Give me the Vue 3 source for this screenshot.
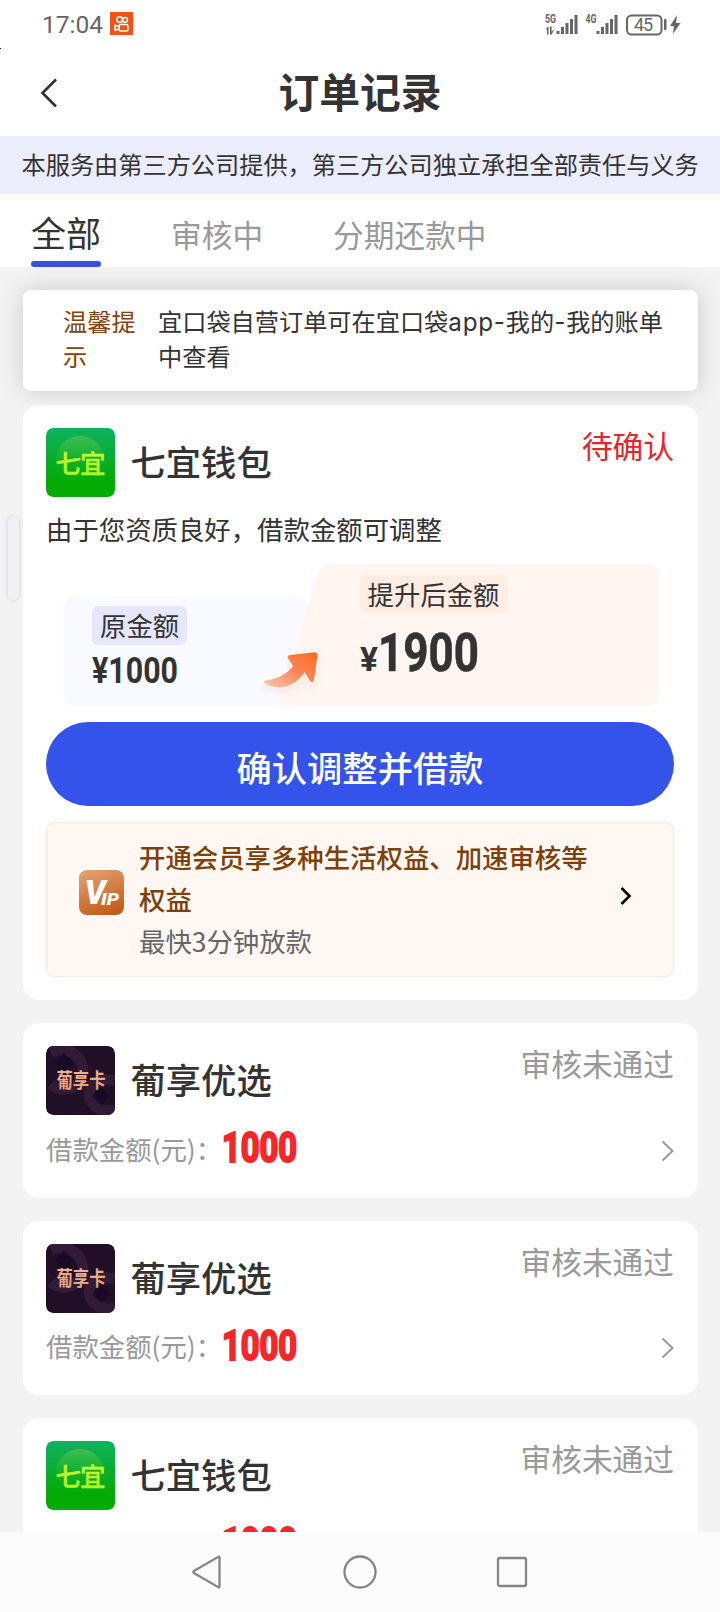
<script setup>
const tabs = ['全部', '审核中', '分期还款中']
const orders = [
  { name: '葡享优选', logo: 'pu', status: '审核未通过', amount: '1000' },
  { name: '葡享优选', logo: 'pu', status: '审核未通过', amount: '1000' },
  { name: '七宜钱包', logo: 'qi', status: '审核未通过', amount: '1000' },
]
</script>

<template>
  <div class="screen">
    <svg width="0" height="0" class="defs">
      <defs>
        <linearGradient id="green" x1="0" y1="0" x2="0" y2="1">
          <stop offset="0" stop-color="#0db261" /><stop offset=".75" stop-color="#04ab08" /><stop offset="1" stop-color="#04ab02" />
        </linearGradient>
        <linearGradient id="disc" x1="0" y1="0" x2="0" y2="1">
          <stop offset="0" stop-color="#4fc153" stop-opacity=".8" /><stop offset=".75" stop-color="#20b51a" stop-opacity="0" />
        </linearGradient>
        <linearGradient id="lime" x1="0" y1="0" x2="0" y2="1">
          <stop offset="0" stop-color="#d5f53a" /><stop offset="1" stop-color="#a4f51c" />
        </linearGradient>
        <linearGradient id="gold" x1="0" y1="0" x2="0" y2="1">
          <stop offset="0" stop-color="#f2b98f" /><stop offset="1" stop-color="#dd9c78" />
        </linearGradient>
        <linearGradient id="arrow" x1="1" y1="0" x2="0" y2="1">
          <stop offset="0" stop-color="#fd6a26" /><stop offset=".45" stop-color="#fc8450" /><stop offset="1" stop-color="#ffc9b5" />
        </linearGradient>
        <linearGradient id="copper" x1=".2" y1="0" x2=".6" y2="1">
          <stop offset="0" stop-color="#e2a071" /><stop offset="1" stop-color="#c35c1c" />
        </linearGradient>
        <symbol id="logo-qi" viewBox="0 0 69 69">
          <rect width="69" height="69" rx="7" fill="url(#green)" />
          <circle cx="34" cy="32" r="24" fill="url(#disc)" />
          <text x="9.500" y="45" font-size="25.500" font-weight="500" textLength="50" fill="url(#lime)" stroke="#bff52b" stroke-width=".4">七宜</text>
        </symbol>
        <symbol id="logo-pu" viewBox="0 0 69 69">
          <rect width="69" height="69" rx="7" fill="#210f28" />
          <g fill="none" stroke="#311b36" stroke-width="11">
            <path d="M5 6a22 22 0 0 1 32 20a19 19 0 0 1-32 12" /><path d="M69 64a20 20 0 0 1-26-15c0-12 12-18 26-14" />
          </g>
          <path d="M18 7l10 10-9 9-10-10zM55 41l9 9-9 9-9-9z" fill="#180a27" />
          <text x="10.500" y="41.500" font-size="20" font-weight="700" textLength="49" lengthAdjust="spacingAndGlyphs" fill="url(#gold)">葡享卡</text>
        </symbol>
      </defs>
    </svg>

    <header class="status-bar">
      <div class="status-left">
        <svg width="64" height="24"><text x="1" y="21" font-size="24.500" textLength="61" class="clock">17:04</text></svg>
        <svg class="app-badge" width="23" height="23" viewBox="0 0 23 23">
          <rect width="23" height="23" fill="#ef5316" />
          <g fill="none" stroke="#fff" stroke-width="1.500"><circle cx="9.600" cy="7.600" r="2.800" /><circle cx="15" cy="7.900" r="2.400" /><rect x="9" y="12.500" width="9" height="6.500" rx="2" /><path d="M9 14.500l-4-1.300v5l4-1.300z" /></g>
        </svg>
      </div>
      <svg class="status-right" width="140" height="26" viewBox="0 0 140 26">
        <g fill="#666">
          <text x="0" y="11" class="net" textLength="11" lengthAdjust="spacingAndGlyphs">5G</text>
          <text x="40.500" y="11" class="net" textLength="11" lengthAdjust="spacingAndGlyphs">4G</text>
          <path d="M.5 17l3-2.500v8h-1.500v-5zM5 14.500h1.600v5l3-2.300-3 5.300h-1.600z" />
          <path d="M11.500 19h3v3h-3zM16 15h3v7h-3zM20.500 11h3v11h-3zM25 7h3v15h-3zM29.500 3h3v19h-3z" />
          <path d="M51.500 19h3v3h-3zM56 15h3v7h-3zM60.500 11h3v11h-3zM65 7h3v15h-3zM69.500 3h3v19h-3z" />
          <rect x="119" y="7" width="2.500" height="11" rx="1" />
          <path d="M132 3l-7 11h4l-1 8 7.500-11h-4.500z" />
          <text x="89" y="18.500" class="battery" textLength="19">45</text>
        </g>
        <rect x="82" y="3.500" width="34.500" height="19" rx="4.500" fill="none" stroke="#666" stroke-width="2" />
      </svg>
    </header>
    <i class="speck"></i>

    <nav class="title-bar">
      <svg class="back" width="18" height="30" viewBox="0 0 18 30"><path d="M16 1.500L2.500 15 16 28.500" fill="none" stroke="#333" stroke-width="2.700" /></svg>
      <h1>订单记录</h1>
    </nav>
    <div class="disclaimer">本服务由第三方公司提供，第三方公司独立承担全部责任与义务</div>
    <div class="tabs">
      <div v-for="(tab, i) in tabs" :key="tab" class="tab" :class="{ active: i === 0 }">{{ tab }}</div>
    </div>

    <main class="content">
      <section class="tip">
        <span class="tip-label">温馨提示</span>
        <span class="tip-text">宜口袋自营订单可在宜口袋<span class="latin">app-</span>我的<span class="latin">-</span>我的账单中查看</span>
      </section>

      <section class="card main-card">
        <div class="head">
          <svg class="logo"><use href="#logo-qi" /></svg>
          <h2>七宜钱包</h2>
          <span class="state pending">待确认</span>
        </div>
        <p class="desc">由于您资质良好，借款金额可调整</p>
        <div class="compare">
          <svg class="compare-bg" width="596" height="143" viewBox="0 0 596 143">
            <path d="M12 33H230Q246 33 244 48L222 142H12Q0 142 0 130V45Q0 33 12 33Z" fill="#f9faff" />
            <path d="M267 0H582Q596 0 596 14V128Q596 142 582 142H216L253 12Q257 0 267 0Z" fill="#fff6f1" />
            <path transform="translate(0 2)" d="M254.500 89Q254.500 86 251 86.300L227 89Q223 89.500 225.500 93L230 100Q220 113 200 115Q204 121 218 121.500Q234 119 241.500 106L247 115Q250 118 251 114Z" fill="url(#arrow)" stroke="#fff" stroke-width="2" paint-order="stroke" class="arrow" />
          </svg>
          <div class="before">
            <span class="chip">原金额</span>
            <svg width="90" height="34"><text x="0" y="29" font-size="36" textLength="86" lengthAdjust="spacingAndGlyphs" class="num">¥1000</text></svg>
          </div>
          <div class="after">
            <span class="chip warm">提升后金额</span>
            <svg width="130" height="48"><text x="0" y="43" font-size="34" textLength="18" lengthAdjust="spacingAndGlyphs" class="num">¥</text><text x="18" y="43" font-size="53.500" textLength="101" lengthAdjust="spacingAndGlyphs" class="num thick">1900</text></svg>
          </div>
        </div>
        <button class="confirm">确认调整并借款</button>
        <div class="vip">
          <svg class="vip-icon" width="45" height="45" viewBox="0 0 45 45">
            <rect width="45" height="45" rx="8" fill="url(#copper)" />
            <g fill="#fff"><text x="5.500" y="34" class="vip-v" textLength="21" lengthAdjust="spacingAndGlyphs">V</text><text x="22" y="34.500" class="vip-ip" textLength="18" lengthAdjust="spacingAndGlyphs">IP</text></g>
          </svg>
          <div class="vip-copy">
            <div class="vip-title">开通会员享多种生活权益、加速审核等权益</div>
            <div class="vip-sub">最快3分钟放款</div>
          </div>
          <svg class="vip-chevron" width="12" height="18" viewBox="0 0 12 18"><path d="M1.500 1L9.500 9l-8 8" fill="none" stroke="#000" stroke-width="2.600" /></svg>
        </div>
      </section>

      <section v-for="(o, i) in orders" :key="i" class="card order">
        <div class="head">
          <svg class="logo"><use :href="'#logo-' + o.logo" /></svg>
          <h2>{{ o.name }}</h2>
          <span class="state">{{ o.status }}</span>
        </div>
        <div class="amount">
          <span class="amount-label">借款金额(元)：</span>
          <svg class="amount-num" width="80" height="38"><text x="1" y="33.500" font-size="43" textLength="75" lengthAdjust="spacingAndGlyphs" class="num red">{{ o.amount }}</text></svg>
          <svg class="chevron" width="13" height="22" viewBox="0 0 13 22"><path d="M1.500 1.500L11.500 11l-10 9.500" fill="none" stroke="#999" stroke-width="2" /></svg>
        </div>
      </section>
    </main>

    <i class="handle"></i>
    <footer class="sys-nav">
      <svg width="34" height="36" viewBox="0 0 34 36"><path d="M28.500 3.500v29q0 1.500-1.300.6L3.300 19.300q-2-1.300 0-2.600L27.200 2.900q1.300-.9 1.300.6z" /></svg>
      <svg width="36" height="36" viewBox="0 0 36 36"><circle cx="18" cy="18" r="15.500" /></svg>
      <svg width="34" height="36" viewBox="0 0 34 36"><rect x="3" y="4" width="28" height="28" rx="1.500" /></svg>
    </footer>
  </div>
</template>

<style>
body { margin: 0; }
</style>

<style scoped>
.screen { position: relative; display: flex; flex-direction: column; width: 720px; height: 1612px; overflow: hidden; background: #f3f3f3; color: #333; font-family: "Noto Sans CJK SC", sans-serif; }
.screen svg { display: block; flex: none; overflow: visible; }
.screen .defs { position: absolute; }
h1, h2, p { margin: 0; }
.status-bar { flex: none; display: flex; justify-content: space-between; height: 48px; padding: 0 36px 0 41px; background: #fff; }
.status-left { display: flex; gap: 5px; padding-top: 12px; }
.clock { font-family: Roboto, sans-serif; fill: #666; }
.status-right { margin: 12px -1px 0 0; }
.net { font: 700 12.500px Roboto, sans-serif; }
.battery { font: 18px Roboto, sans-serif; }
.speck { position: absolute; left: 0; top: 48px; width: 1px; height: 1px; background: #000; }
.title-bar { flex: none; display: grid; grid-template-columns: 80px 1fr 80px; align-items: center; height: 88px; background: #fff; }
.back { margin: 1px 0 0 39.500px; }
h1 { margin-top: -3px; text-align: center; font-size: 40.800px; line-height: 85px; font-weight: 700; }
.disclaimer { flex: none; height: 58px; padding-left: 21.500px; background: #ebedfd; font-size: 24.200px; line-height: 56px; white-space: nowrap; }
.tabs { flex: none; display: flex; gap: 70px; height: 73px; padding-left: 31px; background: #fff; }
.tab { height: 67px; color: #999; font-size: 30.700px; line-height: 79px; }
.tab.active { position: relative; color: #333; font-size: 35px; line-height: 76px; }
.tab.active::after { content: ""; position: absolute; left: 0; right: 0; bottom: -6px; height: 6px; border-radius: 3px; background: #3850dc; }
.content { flex: 1; min-height: 0; overflow: hidden; padding: 23px 22px 0 23px; }
.tip { display: flex; gap: 22px; box-sizing: border-box; height: 101px; padding: 13px 28px 0 40px; border-radius: 8px; background: #fff; box-shadow: 0 0 24px rgba(0, 0, 0, .17); font-size: 24.200px; line-height: 35px; }
.tip-label { flex: none; width: 73px; color: #83430c; }
.latin { font-family: Inter, sans-serif; line-height: 1; letter-spacing: .8px; }
.card { position: relative; box-sizing: border-box; padding: 23px; border-radius: 16px; background: #fff; }
.main-card { height: 595px; margin-top: 14px; }
.head { display: flex; align-items: center; height: 69px; }
.screen .logo { width: 69px; height: 69px; border-radius: 7px; overflow: hidden; }
h2 { margin: -3px 0 0 15.500px; font-size: 35.300px; font-weight: 500; line-height: 66px; }
.state { align-self: flex-start; margin: 0 1px 0 auto; color: #999; font-size: 30.700px; line-height: 34px; }
.order .state { line-height: 35px; margin-top: -1px; }
.pending { color: #e8232b; }
.desc { margin-top: 16px; font-size: 26.400px; line-height: 32px; }
.compare { position: relative; display: flex; width: 596px; height: 143px; margin: 19px 0 0 17px; }
.compare-bg { position: absolute; inset: 0; }
.arrow { filter: drop-shadow(0 4px 3px rgba(230, 130, 90, .15)); }
.before { position: relative; width: 268px; padding: 42px 0 0 29px; }
.after { position: relative; padding-top: 11px; }
.chip { display: block; width: max-content; height: 39px; padding: 0 8px; border-radius: 6px; background: #e6e7fb; font-size: 26.400px; line-height: 37px; }
.before svg { margin-top: 9px; }
.after svg { margin-top: 15px; }
.after .chip { margin-left: -.5px; }
.warm { height: 38px; background: #ffece3; }
.num { font-family: Roboto, sans-serif; font-weight: 700; fill: #333; }
.thick { stroke: #333; stroke-width: .6px; }
.red { fill: #fb2428; stroke: #fb2428; stroke-width: 2.200px; }
.confirm { display: block; width: 628px; height: 84px; margin: 15px 0 0; padding: 6px 0 0; border: 0; border-radius: 42px; background: #3453ea; color: #fff; font: 500 35.300px/74px "Noto Sans CJK SC", sans-serif; }
.vip { display: flex; align-items: center; box-sizing: border-box; width: 628px; height: 155px; margin-top: 16px; padding: 0 41px 0 32px; border: 1px solid #fbe8dc; border-radius: 8px; background: #fff7f2; font-size: 26.400px; line-height: 42px; }
.vip-icon { margin-top: -15px; }
.vip-copy { width: 452px; margin: -1px auto 0 15px; }
.vip-title { color: #7d4008; font-weight: 500; }
.vip-sub { color: #666; }
.vip-v { font: italic 900 33px Roboto, sans-serif; }
.vip-ip { font: italic 900 17px Roboto, sans-serif; }
.vip-chevron { margin-top: -7px; }
.order { height: 174.600px; margin-top: 23px; }
.amount { display: flex; align-items: center; height: 38px; margin-top: 13px; }
.amount-label { width: 175px; margin-top: 3px; color: #999; font-size: 26.400px; line-height: 32px; white-space: nowrap; }
.chevron { margin: 7px 1px 0 auto; }
.handle { position: absolute; left: 8px; top: 516px; width: 11px; height: 84px; border-radius: 6px; background: #f0f0f6; box-shadow: 0 0 4px rgba(0, 0, 0, .16); }
.sys-nav { flex: none; display: flex; justify-content: center; align-items: center; gap: 117px; height: 80px; background: #fcfcfc; }
.sys-nav svg { fill: none; stroke: #858585; stroke-width: 2.300px; }
</style>
